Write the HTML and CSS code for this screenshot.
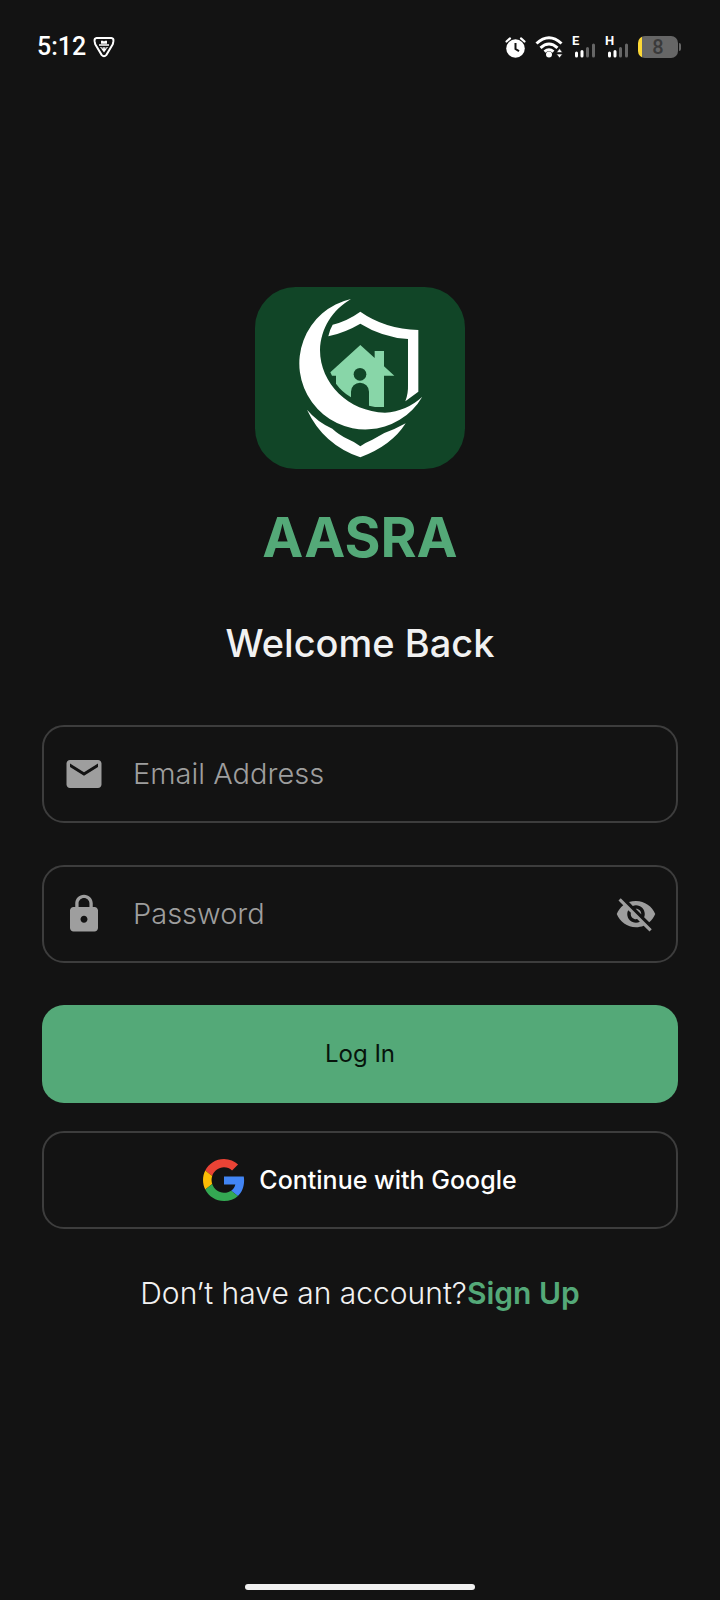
FILE: index.html
```html
<!DOCTYPE html>
<html lang="en">
<head>
<meta charset="utf-8">
<meta name="viewport" content="width=device-width, initial-scale=1">
<title>AASRA – Log In</title>
<link rel="stylesheet" href="styles.css">
</head>
<body>
<div class="screen">
  <header class="status">
    <div class="status-group">
      <span class="clock">5:12</span>
      <svg class="badge" viewBox="0 0 22 22" width="22" height="22" aria-hidden="true">
        <path d="M3.600 2h14.800q2.400.2 2 3.200l-.6 3-6.400 10.600q-2.400 2.800-4.800 0L2.200 8.200l-.6-3Q1.200 2.200 3.600 2z" fill="none" stroke="#fff" stroke-width="2"/>
        <path d="M8 4.800h2l1 .8 1-.8h2v3H8zM6 8.300h10v1.400H6zM7 11h8L11 16.600z" fill="#fff"/>
        <path d="M8.500 11.800h2M11.500 11.800h2" stroke="#131313" stroke-width="1"/>
      </svg>
    </div>
    <div class="status-group status-right">
      <svg viewBox="0 0 22 24" width="22" height="24" aria-hidden="true">
        <circle cx="11.500" cy="13.500" r="9.300" fill="#fff"/>
        <path d="M2.500 6.500L6 3.400M20.500 6.500L17 3.400" stroke="#fff" stroke-width="2.200" stroke-linecap="round"/>
        <path d="M11.500 8v6l3.500 2.200" fill="none" stroke="#131313" stroke-width="2"/>
      </svg>
      <svg class="wifi" viewBox="0 0 28 24" width="28" height="24" aria-hidden="true">
        <g fill="none" stroke="#fff" stroke-width="3">
          <path d="M1.500 8.500q12.500-11.600 25 0"/>
          <path d="M5.500 12.800q8.500-7.600 17 0"/>
          <path d="M9.500 16.600q4.500-3.600 9 0"/>
        </g>
        <circle cx="14" cy="19.500" r="3" fill="#fff"/>
        <path d="M24.500 13.500l3 4h-6zM24.500 23l3-4h-6z" fill="#fff" stroke="#131313" stroke-width=".6"/>
      </svg>
      <span class="signal"><span class="network">E</span>
        <svg viewBox="0 0 24 24" width="24" height="24" aria-hidden="true"><g stroke-width="3" stroke-linecap="round" stroke="#fff"><path d="M4.500 18v3M10 16.500v4.500"/><path stroke="#666" d="M15.500 13.500V21M21.500 10v11"/></g></svg>
      </span>
      <span class="signal"><span class="network">H</span>
        <svg viewBox="0 0 24 24" width="24" height="24" aria-hidden="true"><g stroke-width="3" stroke-linecap="round" stroke="#fff"><path d="M4.500 18v3M10 16.500v4.500"/><path stroke="#666" d="M15.500 13.500V21M21.500 10v11"/></g></svg>
      </span>
      <span class="battery">8</span>
    </div>
  </header>

  <main class="login">
    <svg class="logo" viewBox="30 36 630 546" role="img" aria-label="AASRA logo">
      <rect x="30" y="36" width="630" height="546" rx="122" fill="#114527"/>
      <g fill="#fff">
        <path d="M318 72A198 198 0 1 0 532 365A183 183 0 0 1 420 413C310 410 225 325 225 225C227 160 262 105 318 72z"/>
        <path d="M263 149Q307 138 346 110Q420 162 520 165V350L481 379Q490 356 489 330V192Q412 187 346 146Q300 173 250 184Q254 164 263 149z"/>
        <path d="M186 404Q216 440 262 461Q280 478 308 492Q332 502 346 514Q362 502 382 494L418 474Q450 463 482 445Q440 512 346 547Q234 508 186 404z"/>
      </g>
      <path d="M346 210L389 249V228H417V274L448 302H417V396H390L372 392V350A27 27 0 0 0 318 350V367Q290 350 273 326V302H261L256 292z" fill="#88d6a8"/>
      <circle cx="345" cy="298" r="19" fill="#114527"/>
    </svg>
    <h1 class="brand">AASRA</h1>
    <h2 class="welcome">Welcome Back</h2>
    <form class="form">
      <label class="field">
        <svg class="icon" viewBox="0 0 24 24" aria-hidden="true"><path d="M20 4H4c-1.100 0-2 .9-2 2v12c0 1.100.9 2 2 2h16c1.100 0 2-.9 2-2V6c0-1.100-.9-2-2-2zm0 4l-8 5-8-5V6l8 5 8-5z"/></svg>
        <input class="input" type="email" placeholder="Email Address" aria-label="Email Address">
      </label>
      <div class="field">
        <svg class="icon" viewBox="0 0 24 24" aria-hidden="true"><path d="M18 8h-1V6c0-2.760-2.240-5-5-5S7 3.240 7 6v2H6c-1.100 0-2 .9-2 2v10c0 1.100.9 2 2 2h12c1.100 0 2-.9 2-2V10c0-1.100-.9-2-2-2zm-6 9c-1.100 0-2-.9-2-2s.9-2 2-2 2 .9 2 2-.9 2-2 2zm3.100-9H8.900V6c0-1.710 1.390-3.100 3.100-3.100s3.100 1.390 3.100 3.100z"/></svg>
        <input class="input" type="password" placeholder="Password" aria-label="Password">
        <button class="reveal" type="button" aria-label="Show password">
          <svg class="icon" viewBox="0 0 24 24" aria-hidden="true"><path d="M12 7c2.760 0 5 2.240 5 5 0 .65-.13 1.260-.36 1.830l2.920 2.920c1.510-1.260 2.700-2.890 3.430-4.750-1.730-4.390-6-7.500-11-7.500-1.400 0-2.740.25-3.980.7l2.160 2.160C10.740 7.130 11.350 7 12 7zM2 4.270l2.280 2.280.46.46C3.080 8.300 1.780 10.020 1 12c1.730 4.390 6 7.500 11 7.500 1.550 0 3.030-.3 4.380-.84l.42.42L19.730 22 21 20.730 3.270 3zM7.530 9.800l1.550 1.550c-.05.21-.08.43-.08.65 0 1.660 1.340 3 3 3 .22 0 .44-.03.65-.08l1.550 1.550c-.67.33-1.410.53-2.200.53-2.760 0-5-2.240-5-5 0-.79.2-1.530.53-2.200zm4.310-.78l3.150 3.150.02-.16c0-1.660-1.340-3-3-3z"/></svg>
        </button>
      </div>
      <div class="actions">
        <button class="button primary" type="submit">Log In</button>
        <button class="button outline" type="button">
          <svg class="google" viewBox="0 0 48 48" aria-hidden="true">
            <path fill="#EA4335" d="M24 9.500c3.540 0 6.710 1.220 9.210 3.600l6.850-6.850C35.900 2.380 30.470 0 24 0 14.620 0 6.510 5.380 2.560 13.220l7.980 6.190C12.430 13.720 17.740 9.500 24 9.500z"/>
            <path fill="#4285F4" d="M46.980 24.550c0-1.570-.15-3.090-.38-4.550H24v9.020h12.940c-.58 2.960-2.260 5.480-4.780 7.180l7.730 6c4.510-4.180 7.090-10.360 7.090-17.650z"/>
            <path fill="#FBBC05" d="M10.530 28.590c-.48-1.450-.76-2.990-.76-4.590s.27-3.140.76-4.590l-7.980-6.190C.92 16.460 0 20.120 0 24s.92 7.540 2.560 10.780z"/>
            <path fill="#34A853" d="M24 48c6.480 0 11.930-2.130 15.890-5.810l-7.730-6c-2.150 1.450-4.920 2.300-8.160 2.300-6.260 0-11.570-4.220-13.470-9.910l-7.980 6.190C6.510 42.620 14.620 48 24 48z"/>
          </svg>
          Continue with Google
        </button>
      </div>
    </form>
    <p class="signup">Don’t have an account?<a class="link" href="#signup">Sign Up</a></p>
  </main>
  <div class="home-bar"></div>
</div>
</body>
</html>
```
FILE: styles.css
```css
* {
  box-sizing: border-box;
}

body {
  margin: 0;
  background: #131313;
  color: #f1f1f1;
  font-family: Inter, "Open Sans", sans-serif;
}

.screen {
  min-height: 100vh;
  display: flex;
  flex-direction: column;
}

.status {
  display: flex;
  justify-content: space-between;
  align-items: center;
  padding: 32px 42px 32px 37px;
  color: #fff;
}

.status-group {
  display: flex;
  align-items: center;
  gap: 7px;
  height: 30px;
}

.status-right {
  gap: 9px;
}

.clock {
  font: 500 25px/30px Roboto, sans-serif;
}

.signal {
  position: relative;
  width: 24px;
  height: 24px;
}

.network {
  position: absolute;
  top: 0;
  left: 0;
  font: 700 13px/12px Roboto, sans-serif;
}

.battery {
  position: relative;
  width: 40px;
  height: 22px;
  border-radius: 7px;
  background: linear-gradient(to right, #fdd835 4px, #666 4px);
  color: #3a3a3a;
  font: 500 20px/22px Roboto, sans-serif;
  text-align: center;
}

.battery::after {
  content: "";
  position: absolute;
  top: 7px;
  right: -3px;
  width: 2px;
  height: 8px;
  border-radius: 0 2px 2px 0;
  background: #666;
}

.login {
  flex: 1;
  display: flex;
  flex-direction: column;
  justify-content: center;
  align-items: center;
  padding: 0 42px 78px;
}

.logo {
  display: block;
  width: 210px;
  height: 182px;
}

.brand {
  margin: 32px 0 0;
  color: #54a978;
  font-size: 55px;
  font-weight: 700;
  line-height: 72px;
}

.welcome {
  margin: 44px 0 56px;
  font-size: 38px;
  font-weight: 500;
  line-height: 52px;
}

.form {
  width: 100%;
  display: flex;
  flex-direction: column;
  gap: 42px;
}

.field {
  display: flex;
  align-items: center;
  height: 98px;
  padding: 0 19px;
  border: 2px solid #3d3d3d;
  border-radius: 22px;
}

.icon {
  display: block;
  flex: none;
  width: 42px;
  height: 42px;
  fill: #9e9e9e;
}

.input {
  flex: 1;
  min-width: 0;
  margin-left: 28px;
  padding: 0;
  border: 0;
  outline: 0;
  background: none;
  color: #f1f1f1;
  font: 300 29px/40px Inter, sans-serif;
}

.input::placeholder {
  color: #9e9e9e;
  opacity: 1;
}

.reveal {
  padding: 0;
  border: 0;
  background: none;
}

.actions {
  display: flex;
  flex-direction: column;
  gap: 28px;
}

.button {
  display: flex;
  justify-content: center;
  align-items: center;
  gap: 14px;
  height: 98px;
  border: 0;
  border-radius: 22px;
  font: 500 25px/32px Inter, sans-serif;
}

.primary {
  background: #54a978;
  color: #07140c;
  font-size: 24px;
  font-weight: 400;
}

.outline {
  border: 2px solid #3d3d3d;
  background: none;
  color: #fff;
}

.google {
  width: 42px;
  height: 42px;
}

.signup {
  margin: 44px 0 0;
  font-size: 30px;
  font-weight: 300;
  line-height: 40px;
}

.link {
  color: #54a978;
  font-weight: 600;
  text-decoration: none;
}

.home-bar {
  width: 230px;
  height: 6px;
  margin: 0 auto 10px;
  border-radius: 3px;
  background: #f1f1f1;
}
```
